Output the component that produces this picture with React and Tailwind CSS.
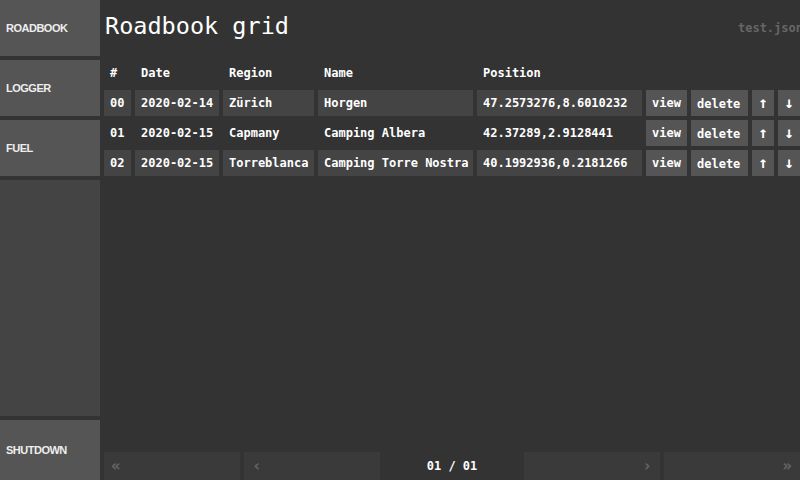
import React from 'react';

const rows = [
  { id: '00', date: '2020-02-14', region: 'Zürich', name: 'Horgen', pos: '47.2573276,8.6010232' },
  { id: '01', date: '2020-02-15', region: 'Capmany', name: 'Camping Albera', pos: '42.37289,2.9128441' },
  { id: '02', date: '2020-02-15', region: 'Torreblanca', name: 'Camping Torre Nostra', pos: '40.1992936,0.2181266' },
];

const mono = { fontFamily: '"DejaVu Sans Mono", "Liberation Mono", monospace' };

const NavButton = ({ label, className = 'h-[56px]' }) => (
  <button className={`${className} w-full bg-[#555555] text-left px-1.5 text-[11px] font-bold tracking-[-0.5px] text-[#eeeeee] font-['Liberation_Sans',sans-serif]`}>
    {label}
  </button>
);

const Cell = ({ children, striped }) => (
  <div className={`h-[26px] flex items-center px-1.5 whitespace-nowrap overflow-hidden ${striped ? 'bg-[#444444]' : ''}`}>
    {children}
  </div>
);

const Action = ({ children, center }) => (
  <button className={`h-[26px] flex items-center ${center ? 'justify-center text-[16px]' : 'px-1.5'} bg-[#555555] text-white font-bold`}>
    {children}
  </button>
);

export default function App() {
  return (
    <div className="w-[800px] h-[480px] bg-[#333333] flex overflow-hidden">
      {/* Sidebar */}
      <div className="w-[100px] flex flex-col gap-1 shrink-0">
        <NavButton label="ROADBOOK" />
        <NavButton label="LOGGER" />
        <NavButton label="FUEL" />
        <div className="flex-1 bg-[#444444]"></div>
        <NavButton label="SHUTDOWN" className="h-[60px]" />
      </div>

      {/* Main */}
      <div className="flex-1 flex flex-col pl-1 text-white" style={mono}>
        <div className="h-[56px] flex items-center justify-between shrink-0">
          <h1 className="text-[23.5px] leading-none pl-px pb-0.5">Roadbook grid</h1>
          <span className="text-[12px] font-bold text-[#666666] -mr-[3px]">test.json</span>
        </div>

        <div className="grid grid-cols-[27px_84px_91px_155px_165px_41px_57px_22px_22px] gap-1 text-[12px] mt-1">
          <Cell><span className="font-bold">#</span></Cell>
          <Cell><span className="font-bold">Date</span></Cell>
          <Cell><span className="font-bold">Region</span></Cell>
          <Cell><span className="font-bold">Name</span></Cell>
          <Cell><span className="font-bold">Position</span></Cell>
          <div></div>
          <div></div>
          <div></div>
          <div></div>

          {rows.map((r, i) => {
            const striped = i % 2 === 0;
            return (
              <React.Fragment key={r.id}>
                <Cell striped={striped}><span className="font-bold">{r.id}</span></Cell>
                <Cell striped={striped}><span className="font-bold">{r.date}</span></Cell>
                <Cell striped={striped}><span className="font-bold">{r.region}</span></Cell>
                <Cell striped={striped}><span className="font-bold">{r.name}</span></Cell>
                <Cell striped={striped}><span className="font-bold">{r.pos}</span></Cell>
                <Action>view</Action>
                <Action><span className="pt-0.5">delete</span></Action>
                <Action center>↑</Action>
                <Action center>↓</Action>
              </React.Fragment>
            );
          })}
        </div>

        <div className="flex-1"></div>

        {/* Pagination */}
        <div className="h-[28px] grid grid-cols-5 gap-1 text-[12px] font-bold shrink-0">
          <div className="bg-[#3a3a3a] flex items-center px-[7px] text-[16px] text-[#666666]">«</div>
          <div className="bg-[#3a3a3a] flex items-center px-2 text-[16px] text-[#666666]">‹</div>
          <div className="flex items-center justify-center text-white">01 / 01</div>
          <div className="bg-[#3a3a3a] flex items-center justify-end px-2 text-[16px] text-[#666666]">›</div>
          <div className="bg-[#3a3a3a] flex items-center justify-end px-2 text-[16px] text-[#666666]">»</div>
        </div>
      </div>
    </div>
  );
}
